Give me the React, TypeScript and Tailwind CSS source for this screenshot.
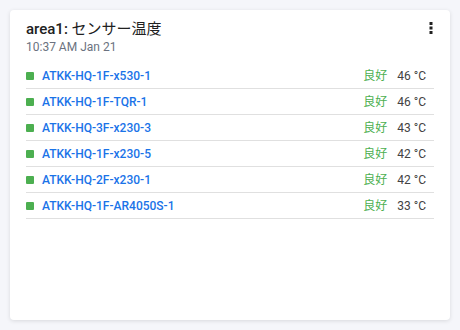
const rows = [
  { name: "ATKK-HQ-1F-x530-1", temp: 46 },
  { name: "ATKK-HQ-1F-TQR-1", temp: 46 },
  { name: "ATKK-HQ-3F-x230-3", temp: 43 },
  { name: "ATKK-HQ-1F-x230-5", temp: 42 },
  { name: "ATKK-HQ-2F-x230-1", temp: 42 },
  { name: "ATKK-HQ-1F-AR4050S-1", temp: 33 },
]

function App() {
  return (
    <div
      className="w-[460px] h-[330px] bg-[#f5f6fa] p-[10px]"
      style={{ fontFamily: 'Roboto, "Noto Sans CJK JP", sans-serif' }}
    >
      <div className="h-full bg-white rounded-[4px] shadow-[0_1px_4px_rgba(0,0,0,0.12)] px-4 pt-[8px]">
        {/* header */}
        <div className="flex items-start justify-between">
          <div>
            <div className="text-[15px] leading-[22px] text-[#212121]">
              <span className="font-medium">area1:</span> センサー温度
            </div>
            <div className="text-[12px] leading-[14px] text-[#6b7280]">10:37 AM Jan 21</div>
          </div>
          <svg width="4" height="12" viewBox="0 0 4 12" className="mt-[4px] mr-[1px]">
            <rect x="0.5" y="0" width="3" height="3" fill="#212121" />
            <rect x="0.5" y="4.5" width="3" height="3" fill="#212121" />
            <rect x="0.5" y="9" width="3" height="3" fill="#212121" />
          </svg>
        </div>

        {/* sensor list */}
        <div className="mt-[9px]">
          {rows.map((r) => (
            <div
              key={r.name}
              className="flex items-center h-[26px] border-b border-[#e0e0e0] pr-2"
            >
              <span className="w-2 h-2 rounded-[1px] bg-[#4caf50] mr-2" />
              <span className="text-[12px] font-medium text-[#1a73e8]">{r.name}</span>
              <span className="ml-auto text-[12px] text-[#4caf50]">良好</span>
              <span className="ml-[10px] text-[12px] text-[#424242]">{r.temp} °C</span>
            </div>
          ))}
        </div>
      </div>
    </div>
  )
}

export default App
